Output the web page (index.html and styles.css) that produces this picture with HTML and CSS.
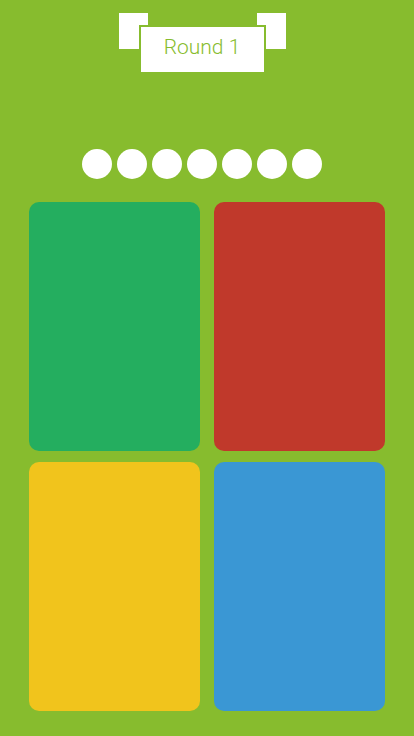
FILE: index.html
```html
<!DOCTYPE html>
<html>
<head>
<meta charset="utf-8">
<link rel="stylesheet" href="styles.css">
</head>
<body>
<div class="banner">
  <div class="ear"></div>
  <div class="label">Round 1</div>
  <div class="ear"></div>
</div>
<div class="dots">
  <span class="dot"></span><span class="dot"></span><span class="dot"></span><span class="dot"></span><span class="dot"></span><span class="dot"></span><span class="dot"></span>
</div>
<div class="board">
  <div class="pad green"></div>
  <div class="pad red"></div>
  <div class="pad yellow"></div>
  <div class="pad blue"></div>
</div>
</body>
</html>
```
FILE: styles.css
```css
html, body {
  margin: 0;
  padding: 0;
  background: #87bc2e;
  height: 736px;
  overflow: hidden;
}
.banner {
  display: flex;
  justify-content: center;
  align-items: flex-start;
  padding-top: 13px;
  padding-right: 10px;
  height: 59px;
}
.ear {
  width: 29px;
  height: 36px;
  background: #fff;
}
.label {
  position: relative;
  margin: 12px -9px 0;
  width: 123px;
  height: 45px;
  background: #fff;
  border: 2px solid #87bc2e;
  color: #87bc2e;
  font-family: Roboto, "Liberation Sans", sans-serif;
  font-weight: 300;
  font-size: 21px;
  line-height: 1;
  padding-bottom: 4px;
  box-sizing: border-box;
  height: 49px;
  width: 127px;
  display: flex;
  align-items: center;
  justify-content: center;
}
.dots {
  display: flex;
  gap: 5px;
  padding-left: 82px;
  margin-top: 77px;
  height: 30px;
}
.dot {
  width: 30px;
  height: 30px;
  border-radius: 50%;
  background: #fff;
}
.board {
  display: grid;
  grid-template-columns: 171px 171px;
  grid-template-rows: 249px 249px;
  column-gap: 14px;
  row-gap: 11px;
  padding: 23px 0 0 29px;
}
.pad {
  border-radius: 10px;
}
.green { background: #24ae5f; }
.red { background: #c0392b; }
.yellow { background: #f1c41c; }
.blue { background: #3a97d4; }
```
